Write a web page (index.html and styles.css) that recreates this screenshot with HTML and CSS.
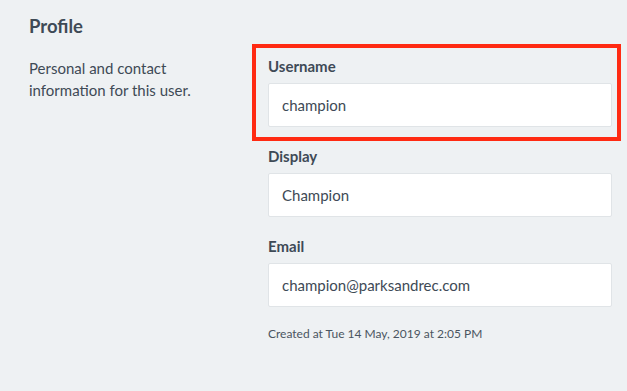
FILE: index.html
```html
<!DOCTYPE html>
<html lang="en">
<head>
    <meta charset="UTF-8">
    <meta name="viewport" content="width=device-width, initial-scale=1.0">
    <title>Profile</title>
    <link rel="stylesheet" href="styles.css">
</head>
<body>
    <div class="section">
        <!-- Section title -->
        <h2 class="section-title">Profile</h2>

        <div class="section-row">
            <p class="section-desc">Personal and contact information for this user.</p>

            <!-- Fields -->
            <div class="fields">
                <div class="field highlight">
                    <label class="field-label" for="username">Username</label>
                    <input class="field-input" id="username" type="text" value="champion">
                </div>
                <div class="field">
                    <label class="field-label" for="display">Display</label>
                    <input class="field-input" id="display" type="text" value="Champion">
                </div>
                <div class="field">
                    <label class="field-label" for="email">Email</label>
                    <input class="field-input" id="email" type="text" value="champion@parksandrec.com">
                </div>
                <p class="created">Created at Tue 14 May, 2019 at 2:05 PM</p>
            </div>
        </div>
    </div>
</body>
</html>
```

FILE: styles.css
```css
/* Reset and base styles */
* {
    margin: 0;
    padding: 0;
    box-sizing: border-box;
}

body {
    font-family: Lato, 'Open Sans', sans-serif;
    background: #eef1f3;
    color: #3e4a56;
    min-height: 100vh;
}

/* Section */
.section {
    padding: 15px 15px 0 29px;
}

.section-title {
    font-size: 18.5px;
    line-height: 22px;
    font-weight: 700;
    margin-bottom: 20px;
}

.section-row {
    display: flex;
}

.section-desc {
    width: 239px;
    padding-right: 60px;
    font-size: 15px;
    line-height: 22px;
}

/* Fields */
.fields {
    width: 344px;
}

.field {
    position: relative;
    margin-bottom: 20px;
}

.field.highlight::after {
    content: '';
    position: absolute;
    left: -16px;
    right: -9px;
    top: -13px;
    bottom: -14px;
    border: 4px solid #ff2a12;
    pointer-events: none;
}

.field-label {
    display: block;
    font-size: 15px;
    line-height: 18px;
    font-weight: 700;
    margin-bottom: 8px;
}

.field-input {
    display: block;
    width: 100%;
    height: 44px;
    padding: 0 13px;
    border: 1px solid #e0e4e7;
    border-radius: 2px;
    background: #fff;
    font-family: inherit;
    font-size: 15px;
    color: #3e4a56;
    outline: none;
}

.created {
    font-size: 12px;
    line-height: 14px;
    color: #4a5561;
}
```
